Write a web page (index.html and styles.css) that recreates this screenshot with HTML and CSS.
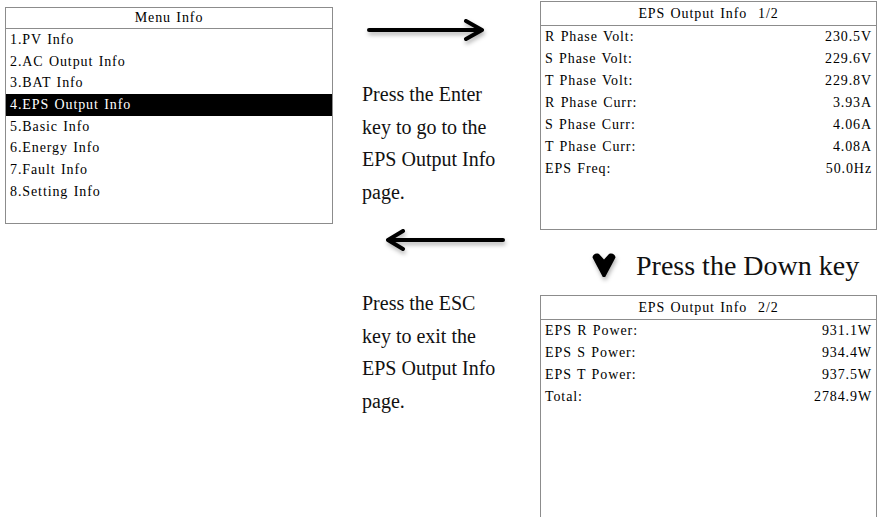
FILE: index.html
```html
<!DOCTYPE html>
<html lang="en">
<head>
<meta charset="utf-8">
<title>EPS Output Info</title>
<link rel="stylesheet" href="styles.css">
</head>
<body>
<div class="page">
  <section class="col-menu">
    <div class="lcd menu">
      <div class="lcd-head">Menu Info</div>
      <ul class="menu-list">
        <li>1.PV Info</li>
        <li>2.AC Output Info</li>
        <li>3.BAT Info</li>
        <li class="sel">4.EPS Output Info</li>
        <li>5.Basic Info</li>
        <li>6.Energy Info</li>
        <li>7.Fault Info</li>
        <li>8.Setting Info</li>
      </ul>
    </div>
  </section>

  <section class="col-mid">
    <svg class="arrow arrow-right" width="120" height="24" viewBox="0 0 120 24">
      <line x1="2" y1="12" x2="113" y2="12" stroke="#000" stroke-width="4" stroke-linecap="round"/>
      <polyline points="99,3 115,12 99,21" fill="none" stroke="#000" stroke-width="4" stroke-linecap="round" stroke-linejoin="round"/>
    </svg>
    <p class="note note-enter">Press the Enter<br>key to go to the<br>EPS Output Info<br>page.</p>
    <svg class="arrow arrow-left" width="122" height="24" viewBox="0 0 122 24">
      <line x1="4" y1="12" x2="118" y2="12" stroke="#000" stroke-width="4" stroke-linecap="round"/>
      <polyline points="18,3 3,12 18,21" fill="none" stroke="#000" stroke-width="4" stroke-linecap="round" stroke-linejoin="round"/>
    </svg>
    <p class="note note-esc">Press the ESC<br>key to exit the<br>EPS Output Info<br>page.</p>
  </section>

  <section class="col-right">
    <div class="lcd page-one">
      <div class="lcd-head lcd-head-tall">EPS Output Info&nbsp;&nbsp;1/2</div>
      <div class="row"><span>R Phase Volt:</span><span>230.5V</span></div>
      <div class="row"><span>S Phase Volt:</span><span>229.6V</span></div>
      <div class="row"><span>T Phase Volt:</span><span>229.8V</span></div>
      <div class="row"><span>R Phase Curr:</span><span>3.93A</span></div>
      <div class="row"><span>S Phase Curr:</span><span>4.06A</span></div>
      <div class="row"><span>T Phase Curr:</span><span>4.08A</span></div>
      <div class="row"><span>EPS Freq:</span><span>50.0Hz</span></div>
    </div>

    <div class="down-row">
      <svg class="down-icon" width="24" height="25" viewBox="0 0 24 25">
        <path d="M0.5,4.5 C0.5,1.5 4,-0.5 7,1 L12,6.5 L17,1 C20,-0.5 23.5,1.5 23.5,4.5 L13.2,24 L10.8,24 Z" fill="#000"/>
      </svg>
      <span class="down-text">Press the Down key</span>
    </div>

    <div class="lcd page-two">
      <div class="lcd-head lcd-head-tall">EPS Output Info&nbsp;&nbsp;2/2</div>
      <div class="row"><span>EPS R Power:</span><span>931.1W</span></div>
      <div class="row"><span>EPS S Power:</span><span>934.4W</span></div>
      <div class="row"><span>EPS T Power:</span><span>937.5W</span></div>
      <div class="row"><span>Total:</span><span>2784.9W</span></div>
    </div>
  </section>
</div>
</body>
</html>
```

FILE: styles.css
```css
html, body {
  margin: 0;
  padding: 0;
  background: #fff;
}

body {
  width: 881px;
  height: 517px;
  overflow: hidden;
}

.page {
  display: grid;
  grid-template-columns: 328px 207px 337px;
  padding-left: 5px;
  align-items: start;
}

/* LCD style panels */
.lcd {
  box-sizing: border-box;
  border: 1px solid #8c8c8c;
  font-family: "Liberation Serif", "Times New Roman", serif;
  font-size: 14px;
  color: #000;
  letter-spacing: 0.9px;
  word-spacing: 1px;
}

.lcd-head {
  height: 20px;
  line-height: 20px;
  text-align: center;
  border-bottom: 1px solid #8c8c8c;
}

.lcd-head-tall {
  height: 23px;
  line-height: 24px;
}

.menu {
  margin-top: 7px;
  height: 217px;
}

.menu-list {
  list-style: none;
  margin: 0;
  padding: 0;
}

.menu-list li {
  height: 21.7px;
  line-height: 21.7px;
  padding-left: 4px;
}

.menu-list .sel {
  background: #000;
  color: #fff;
}

.row {
  display: flex;
  justify-content: space-between;
  height: 22px;
  line-height: 22px;
  padding: 0 4px 0 4px;
}

.page-one {
  margin-top: 1px;
  height: 229px;
}

.page-two {
  height: 240px;
}

/* middle column */
.col-mid {
  display: flex;
  flex-direction: column;
  align-items: flex-start;
}

.arrow {
  display: block;
  filter: drop-shadow(1px 3px 2px rgba(0, 0, 0, 0.3));
}

.arrow-right {
  margin-top: 18px;
  margin-left: 34px;
}

.arrow-left {
  margin-top: 20px;
  margin-left: 52px;
}

.note {
  margin: 0;
  padding-left: 29px;
  font-family: "Liberation Serif", "Times New Roman", serif;
  font-size: 20px;
  line-height: 32.5px;
  color: #111;
}

.note-enter {
  margin-top: 36px;
}

.note-esc {
  margin-top: 35px;
}

/* down key row */
.down-row {
  box-sizing: border-box;
  height: 65px;
  padding-top: 6px;
  padding-left: 52px;
  display: flex;
  align-items: center;
  gap: 20px;
}

.down-icon {
  display: block;
  filter: drop-shadow(1px 3px 2px rgba(0, 0, 0, 0.3));
}

.down-text {
  font-family: "Liberation Serif", "Times New Roman", serif;
  font-size: 28px;
  line-height: 32px;
  color: #111;
}
```
